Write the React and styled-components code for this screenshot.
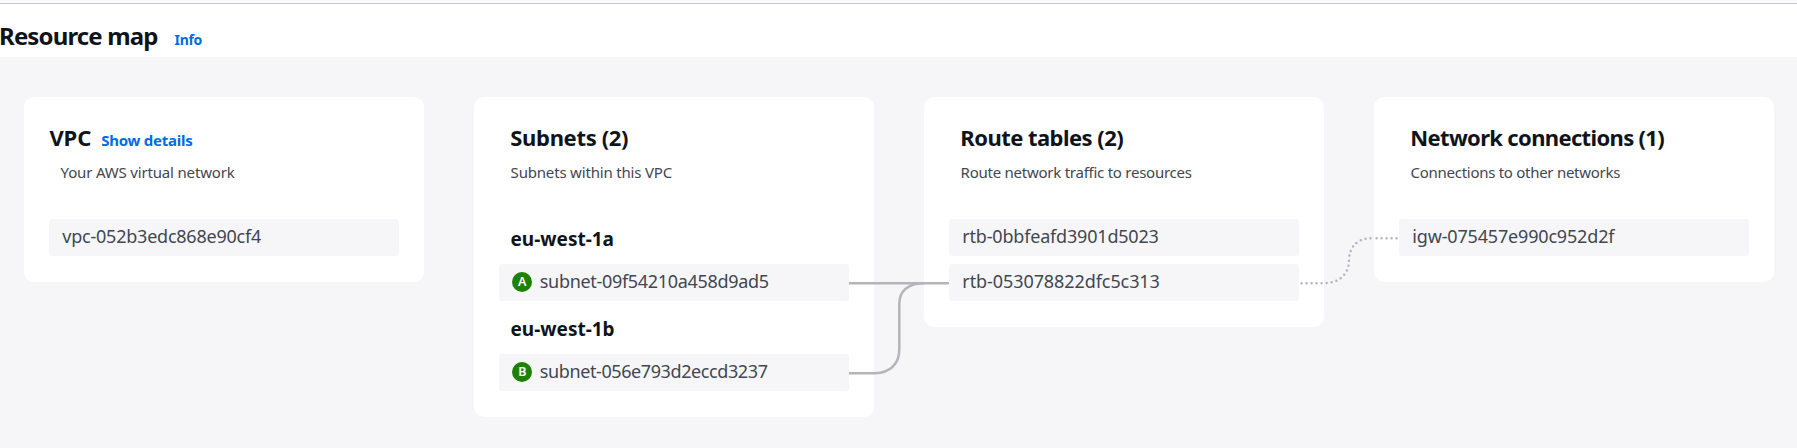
import React from 'react';
import styled, { createGlobalStyle } from 'styled-components';

const GlobalStyle = createGlobalStyle`
  body {
    margin: 0;
    background: #fff;
    font-family: 'Noto Sans', 'Open Sans', sans-serif;
    color: #0f141a;
  }
`;

const Page = styled.div`
  display: flex;
  flex-direction: column;
  height: 448px;
  overflow: hidden;
`;

const TopDivider = styled.div`
  height: 3px;
  flex: none;
  background: #fafafb;
  border-bottom: 1px solid #c6c6cd;
`;

const Header = styled.header`
  display: flex;
  align-items: baseline;
  gap: 17px;
  height: 53px;
  flex: none;
  box-sizing: border-box;
  padding-top: 15px;
`;

const Heading = styled.h2`
  margin: 0 0 0 -1px;
  font-size: 24px;
  line-height: 34px;
  font-weight: 700;
  letter-spacing: -0.86px;
`;

const Link = styled.a`
  color: #006ce0;
  font-size: ${(p) => p.$size}px;
  font-weight: 700;
  letter-spacing: ${(p) => p.$spacing || 0}px;
`;

const MapArea = styled.main`
  position: relative;
  flex: 1;
  display: flex;
  align-items: flex-start;
  gap: 50px;
  padding: 40px 24px 0;
  background: #f6f6f9;
`;

const Card = styled.section`
  box-sizing: border-box;
  width: 400px;
  flex: none;
  padding: 25px 25px 26px;
  border-radius: 10px;
  background: #fff;
`;

const TitleRow = styled.div`
  display: flex;
  align-items: baseline;
  gap: 10px;
  height: 31px;
  padding-left: ${(p) => p.$inset}px;
`;

const Title = styled.h3`
  margin: 0;
  font-size: 22px;
  line-height: 31px;
  font-weight: 700;
  white-space: nowrap;
  letter-spacing: ${(p) => p.$spacing}px;
`;

const Description = styled.p`
  margin: 9px 0 37px;
  padding-left: 11.6px;
  font-size: 15px;
  line-height: 20px;
  color: #424650;
  letter-spacing: ${(p) => p.$spacing}px;
`;

const List = styled.div`
  display: flex;
  flex-direction: column;
  gap: 8px;
`;

const Zone = styled.h4`
  margin: 0 0 5px;
  padding-left: 11.5px;
  font-size: 19px;
  line-height: 40px;
  font-weight: 700;
`;

const Item = styled.div`
  display: flex;
  gap: 7.5px;
  box-sizing: border-box;
  height: 37px;
  padding-left: 13.3px;
  border-radius: 3px;
  background: #f6f6f9;
`;

const ItemText = styled.span`
  font-size: 18px;
  line-height: 34px;
  color: #424650;
  letter-spacing: ${(p) => p.$spacing}px;
`;

const Badge = styled.span`
  width: 20px;
  height: 20px;
  margin-top: 8px;
  border-radius: 50%;
  background: #1d8102;
  color: #fff;
  font-size: 12.5px;
  line-height: 19px;
  font-weight: 600;
  text-align: center;
`;

const Connectors = styled.svg`
  position: absolute;
  top: 0;
  left: 0;
  pointer-events: none;
`;

const columns = [
  {
    title: 'VPC',
    spacing: -0.1,
    inset: 0.4,
    link: 'Show details',
    description: 'Your AWS virtual network',
    descSpacing: -0.17,
    groups: [{ items: [{ id: 'vpc-052b3edc868e90cf4', spacing: -0.23 }] }],
  },
  {
    title: 'Subnets (2)',
    spacing: -0.33,
    inset: 11.3,
    description: 'Subnets within this VPC',
    descSpacing: -0.18,
    groups: [
      { zone: 'eu-west-1a', items: [{ id: 'subnet-09f54210a458d9ad5', spacing: -0.31, badge: 'A' }] },
      { zone: 'eu-west-1b', items: [{ id: 'subnet-056e793d2eccd3237', spacing: -0.4, badge: 'B' }] },
    ],
  },
  {
    title: 'Route tables (2)',
    spacing: -0.54,
    inset: 11.3,
    description: 'Route network traffic to resources',
    descSpacing: -0.25,
    groups: [
      { items: [{ id: 'rtb-0bbfeafd3901d5023', spacing: -0.19 }] },
      { items: [{ id: 'rtb-053078822dfc5c313', spacing: -0.08 }] },
    ],
  },
  {
    title: 'Network connections (1)',
    spacing: -0.66,
    inset: 11.3,
    description: 'Connections to other networks',
    descSpacing: -0.28,
    groups: [{ items: [{ id: 'igw-075457e990c952d2f', spacing: -0.17 }] }],
  },
];

function Column({ column }) {
  return (
    <Card>
      <TitleRow $inset={column.inset}>
        <Title $spacing={column.spacing}>{column.title}</Title>
        {column.link && <Link $size={15} $spacing={-0.24}>{column.link}</Link>}
      </TitleRow>
      <Description $spacing={column.descSpacing}>{column.description}</Description>
      <List>
        {column.groups.map((group, i) => (
          <div key={i}>
            {group.zone && <Zone>{group.zone}</Zone>}
            {group.items.map((item) => (
              <Item key={item.id}>
                {item.badge && <Badge>{item.badge}</Badge>}
                <ItemText $spacing={item.spacing}>{item.id}</ItemText>
              </Item>
            ))}
          </div>
        ))}
      </List>
    </Card>
  );
}

export default function App() {
  return (
    <Page>
      <GlobalStyle />
      <TopDivider />
      <Header>
        <Heading>Resource map</Heading>
        <Link $size={14} $spacing={-0.35}>Info</Link>
      </Header>
      <MapArea>
        {columns.map((column) => (
          <Column key={column.title} column={column} />
        ))}
        <Connectors width="1797" height="391" fill="none" stroke="#b4b4bb" strokeWidth="2.5">
          <path d="M849 226.2H949" />
          <path d="M849 316.2H875C890 316.2 899.3 307 899.3 292V247C899.3 234 908 226.2 924 226.2" />
          <g strokeLinecap="round" strokeDasharray="0 5">
            <path d="M1301.6 226.2H1324C1339 226.2 1349 217 1349 203.7C1349 190 1357 181.3 1371.5 181.3" />
            <path d="M1376.6 181.3H1398" />
          </g>
        </Connectors>
      </MapArea>
    </Page>
  );
}
